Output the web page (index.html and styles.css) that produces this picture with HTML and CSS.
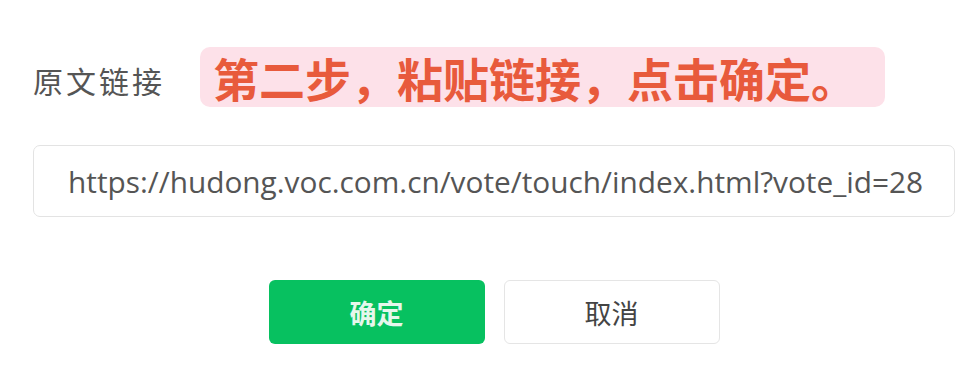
FILE: index.html
```html
<html lang="zh-CN">

<head>
    <meta charset="UTF-8">
    <meta name="viewport" content="width=device-width, initial-scale=1.0">
    <title>原文链接</title>
    <link rel="stylesheet" href="styles.css">
</head>

<body>
    <div class="panel">
        <div class="fila">
            <label class="etiqueta" for="enlace">原文链接</label>
            <span class="aviso">第二步，粘贴链接，点击确定。</span>
        </div>

        <div class="campo">
            <input type="text" id="enlace" value="https://hudong.voc.com.cn/vote/touch/index.html?vote_id=28">
        </div>

        <div class="acciones">
            <button class="btn btn-ok">确定</button>
            <button class="btn btn-cancel">取消</button>
        </div>
    </div>
</body>

</html>
```

FILE: styles.css
```css
body {
    margin: 0;
    background: #fff;
    font-family: "Open Sans", "Noto Sans CJK SC", sans-serif;
}

.panel {
    width: 922px;
    padding: 47px 0 0 33px;
}

.fila {
    display: flex;
    align-items: center;
    height: 60px;
}

.etiqueta {
    width: 167px;
    font-size: 30px;
    letter-spacing: 3px;
    color: #555;
    font-family: "Noto Sans CJK SC", sans-serif;
    padding-top: 6px;
}

.aviso {
    height: 60px;
    box-sizing: border-box;
    padding: 0 28px 0 13px;
    display: flex;
    align-items: center;
    background: #fde1e9;
    border-radius: 10px;
    font-family: "Noto Sans CJK SC", sans-serif;
    font-size: 46px;
    font-weight: 700;
    color: #e85a3c;
}

.campo {
    margin-top: 38px;
}

input[type="text"] {
    width: 922px;
    height: 72px;
    box-sizing: border-box;
    padding: 0 0 0 34px;
    border: 1px solid #e3e3e3;
    border-radius: 7px;
    font-family: "Open Sans", sans-serif;
    font-size: 29.8px;
    color: #555;
    outline: none;
}

.acciones {
    display: flex;
    justify-content: center;
    gap: 19px;
    margin-top: 63px;
}

.btn {
    width: 216px;
    height: 64px;
    border-radius: 6px;
    font-family: "Noto Sans CJK SC", sans-serif;
    font-size: 27px;
    cursor: pointer;
}

.btn-ok {
    border: none;
    background: #07c160;
    color: #e6f7ec;
    font-weight: 700;
}

.btn-cancel {
    border: 1px solid #e5e5e5;
    background: #fff;
    color: #444;
}
```
